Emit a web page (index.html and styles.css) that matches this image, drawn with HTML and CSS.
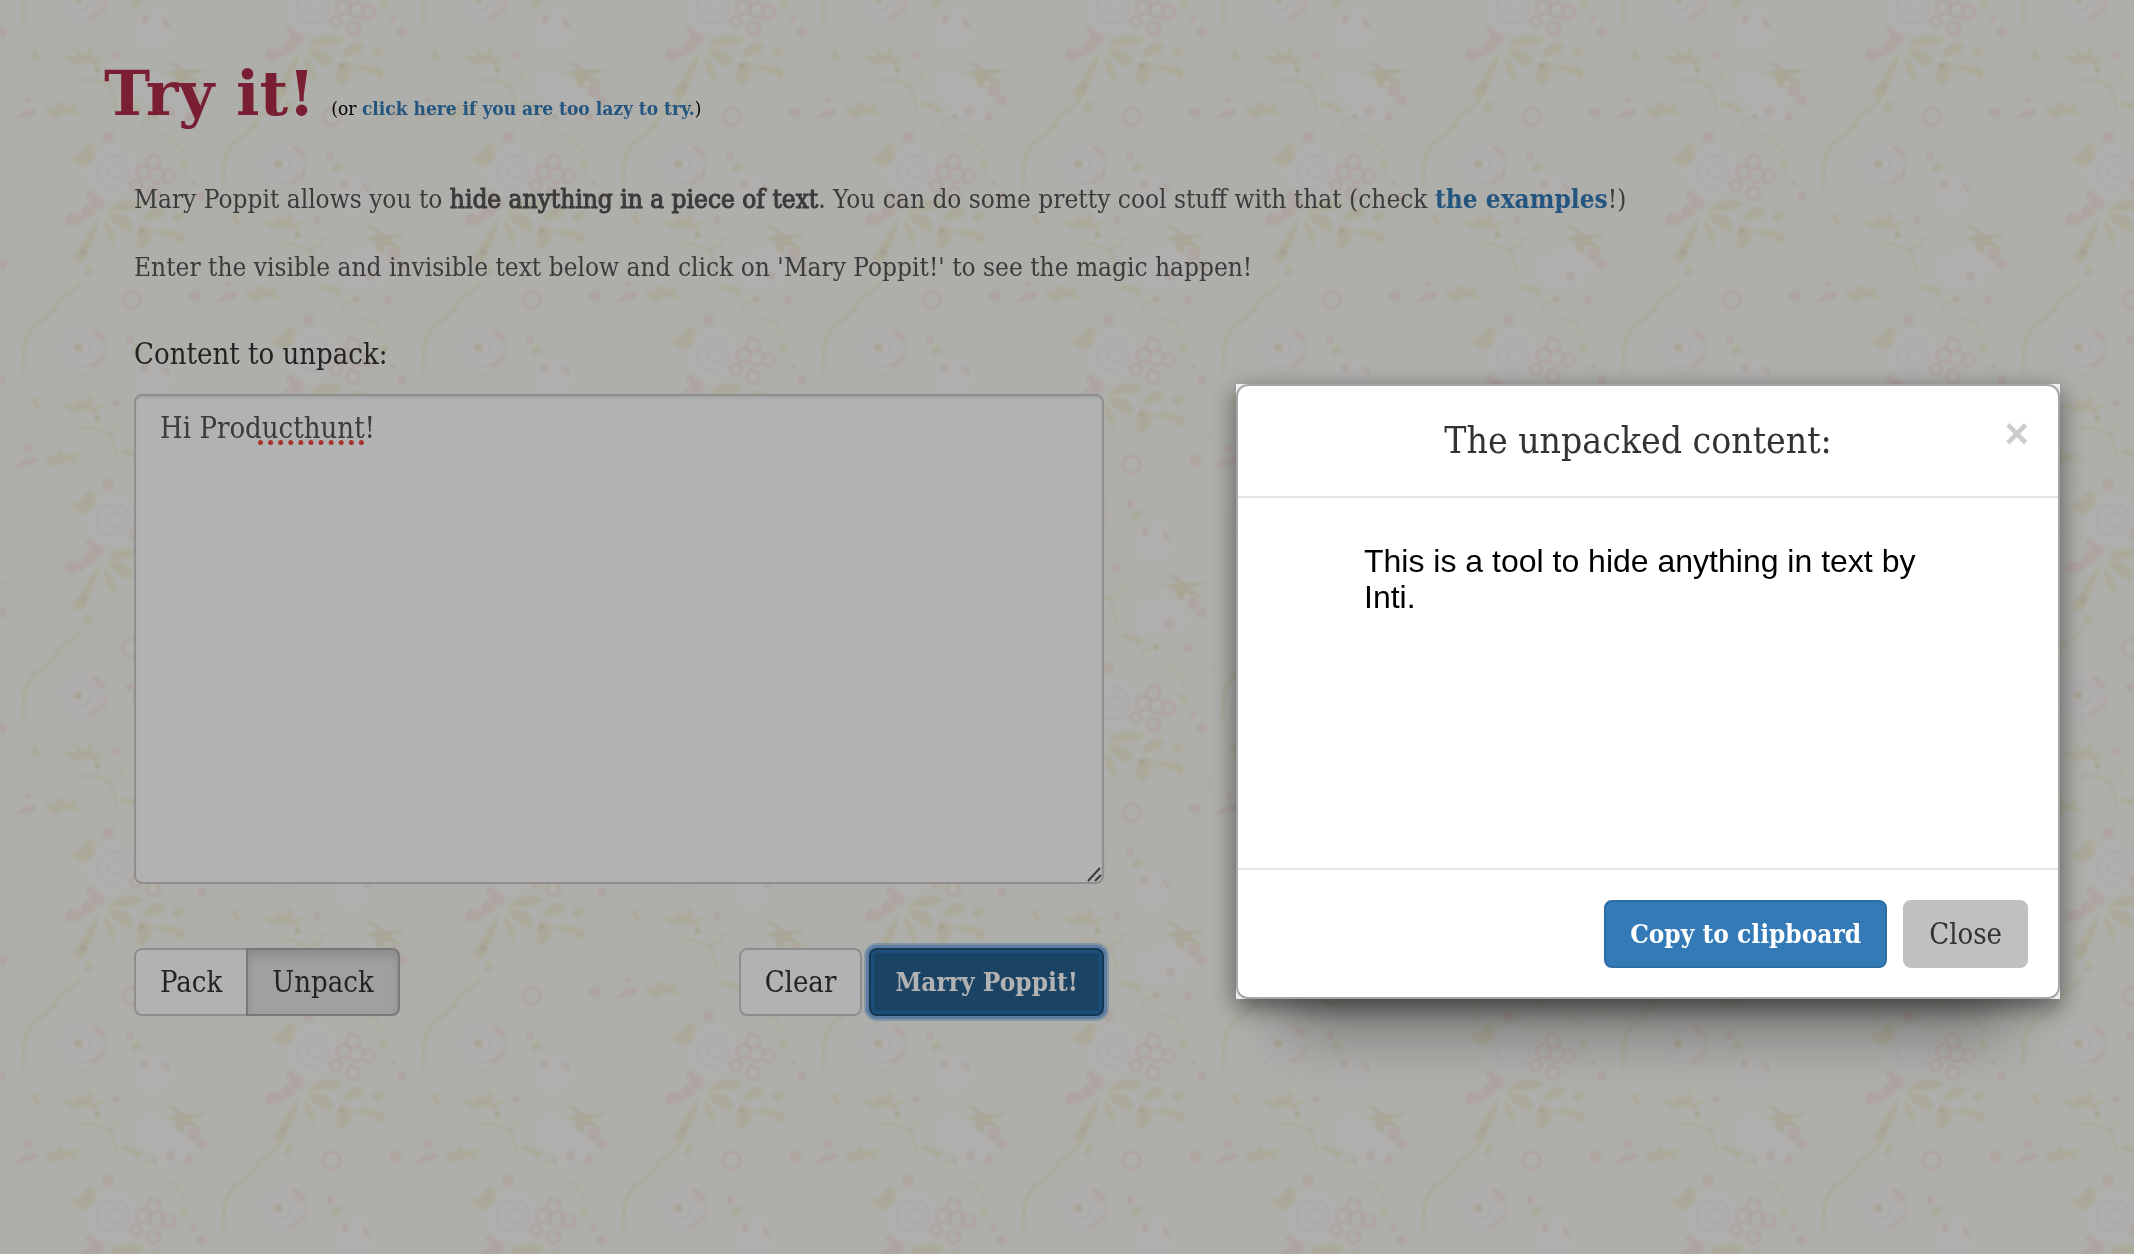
FILE: index.html
```
<!DOCTYPE html>
<html lang="en">
<head>
<meta charset="UTF-8">
<meta name="viewport" content="width=device-width, initial-scale=1.0">

<title>Mary Poppit</title>

<link rel="stylesheet" href="styles.css">
</head>
<body>

<!-- floral wallpaper -->
<svg class="wallpaper" aria-hidden="true">
    <defs>
        <filter id="soft"><feGaussianBlur stdDeviation="1"/></filter>
        <g id="bouquet">
            <g fill="#fdfafa">
                <circle cx="155" cy="455" r="78"/>
                <circle cx="665" cy="435" r="76"/>
                <circle cx="880" cy="520" r="60"/>
                <circle cx="270" cy="200" r="50"/>
                <circle cx="930" cy="740" r="60"/>
            </g>
            <g fill="none" stroke="#f4f0d6" stroke-width="12" stroke-linecap="round">
                <path d="M660 240 Q630 270 600 290 Q570 340 520 370 Q495 400 492 440 L490 500"/>
                <path d="M590 320 L560 335 M500 400 L486 430" stroke-width="8"/>
                <path d="M660 680 Q690 660 740 690 Q770 690 795 650 M740 690 Q770 710 765 765" stroke-width="9"/>
                <path d="M240 320 Q250 295 290 285 M310 345 Q350 350 370 400" stroke-width="9"/>
                <path d="M385 320 Q440 355 500 365 M40 300 L50 380 M690 500 L682 550" stroke-width="3"/>
            </g>
            <g fill="#f3efd0">
                <path d="M28 415 Q50 400 65 395 Q75 365 98 372 Q112 390 105 410 Q85 440 65 440 Q45 425 28 415Z"/>
                <path d="M145 575 Q165 535 200 545 Q230 535 252 550 Q235 575 205 570 Q175 575 145 575Z"/>
                <path d="M245 605 Q260 560 300 560 Q325 570 300 590 Q275 605 245 605Z"/>
                <path d="M140 580 Q190 575 215 605 Q225 630 205 635 Q165 625 140 580Z"/>
                <path d="M238 625 Q255 605 275 630 Q285 660 245 692 Q215 670 238 625Z"/>
                <path d="M285 630 Q330 620 370 645 Q385 660 360 675 Q350 650 285 640Z"/>
                <path d="M120 590 Q90 620 60 680 Q35 700 40 725 Q70 740 80 705 Q110 650 120 590Z"/>
                <path d="M135 600 Q125 640 165 680 Q175 640 135 600Z"/>
                <path d="M340 580 L375 575 L360 605 L335 600Z"/>
                <path d="M605 600 L650 605 L640 575 L670 600 L695 570 L700 610 L735 600 L705 635 L680 620 L640 630Z"/>
                <path d="M510 585 L530 580 L545 620 L520 610Z"/>
                <path d="M185 245 Q220 240 250 270 L235 285 Q215 260 185 260Z"/>
                <path d="M815 440 Q830 420 848 430 Q845 460 815 455Z M360 425 L385 430 L378 458 L360 445Z"/>
                <path d="M1150 265 L1190 260 L1200 240 L1215 260 L1260 250 L1240 270 L1275 290 L1215 280 L1180 300Z"/>
                <path d="M80 735 L100 745 L90 770 L70 765Z M205 365 L220 375 L215 385Z"/>
            </g>
            <path fill="#eee6c6" d="M900 645 Q940 655 955 645 L915 610 Q950 625 975 645 L1040 642 Q1010 655 985 660 L1045 695 Q1000 680 975 675 L970 700 L950 690 L945 665Z"/>
            <g fill="#ecdfc2">
                <circle cx="245" cy="632" r="11"/>
                <circle cx="655" cy="432" r="12"/>
                <circle cx="288" cy="288" r="9"/>
                <circle cx="70" cy="695" r="12"/>
                <circle cx="712" cy="645" r="9"/>
            </g>
            <g fill="none" stroke="#fae0db" stroke-width="9">
                <circle cx="280" cy="425" r="20"/>
                <circle cx="250" cy="455" r="20"/>
                <circle cx="290" cy="465" r="22"/>
                <circle cx="325" cy="470" r="18"/>
                <circle cx="228" cy="497" r="16"/>
                <circle cx="280" cy="520" r="19"/>
                <circle cx="815" cy="290" r="26"/>
                <path d="M740 430 Q735 475 690 490"/>
            </g>
            <g fill="none" stroke="#f9efec" stroke-width="5">
                <circle cx="660" cy="435" r="30"/>
                <circle cx="665" cy="440" r="50"/>
                <circle cx="668" cy="440" r="72"/>
                <circle cx="165" cy="455" r="22"/>
                <circle cx="160" cy="455" r="48"/>
                <circle cx="1030" cy="205" r="22"/>
            </g>
            <g fill="#fae3de">
                <circle cx="110" cy="550" r="22"/>
                <circle cx="85" cy="575" r="20"/>
                <circle cx="35" cy="598" r="20"/>
                <circle cx="60" cy="595" r="14"/>
                <circle cx="90" cy="525" r="12"/>
                <circle cx="425" cy="530" r="14"/>
                <circle cx="400" cy="490" r="9"/>
                <path d="M695 375 Q720 370 740 405 L725 415 Q705 400 695 375Z"/>
                <circle cx="855" cy="490" r="12"/>
                <path d="M905 485 Q930 495 932 520 Q915 520 905 485Z"/>
                <circle cx="1000" cy="705" r="20"/>
                <circle cx="1025" cy="735" r="16"/>
                <circle cx="930" cy="768" r="14"/>
                <path d="M1070 290 Q1095 262 1135 268 Q1130 290 1070 300Z"/>
                <circle cx="1005" cy="278" r="18"/>
                <circle cx="1105" cy="240" r="11"/>
                <circle cx="385" cy="290" r="14"/>
                <circle cx="770" cy="600" r="12"/>
                <circle cx="145" cy="350" r="18"/>
                <circle cx="810" cy="408" r="12"/>
            </g>
        </g>
        <pattern id="flowers" x="60" y="20" width="400" height="348" patternUnits="userSpaceOnUse" viewBox="0 0 1200 1044">
            <use href="#bouquet"/>
            <use href="#bouquet" x="-1200"/>
            <use href="#bouquet" x="1200"/>
            <use href="#bouquet" x="-600" y="550"/>
            <use href="#bouquet" x="600" y="550"/>
            <use href="#bouquet" x="-600" y="-494"/>
            <use href="#bouquet" x="600" y="-494"/>
        </pattern>
    </defs>
    <rect width="100%" height="100%" fill="url(#flowers)" filter="url(#soft)"/>
</svg>

<main class="page">
    <header class="title">
        <h1>Try it!</h1>
        <small>(or <a href="#lazy">click here if you are too lazy to try.</a>)</small>
    </header>

    <div class="content">
        <p>Mary Poppit allows you to <b>hide anything in a piece of text</b>. You can do some pretty cool stuff with that (check <a href="#examples">the examples</a>!)</p>
        <p>Enter the visible and invisible text below and click on 'Mary Poppit!' to see the magic happen!</p>

        <form class="unpack-form">
            <label for="packed">Content to unpack:</label>
            <div class="field">
                <textarea id="packed" name="packed" spellcheck="false">Hi Producthunt!</textarea>
                <span class="misspelled"></span>
                <svg class="grip" viewBox="0 0 16 16" aria-hidden="true"><path d="M2 15 L14 2 M9 15 L15 9"/></svg>
            </div>
            <div class="actions">
                <div class="btn-group">
                    <button class="btn" type="button">Pack</button>
                    <button class="btn active" type="button">Unpack</button>
                </div>
                <div class="btn-row">
                    <button class="btn" type="reset">Clear</button>
                    <button class="btn btn-primary focus" type="button">Marry Poppit!</button>
                </div>
            </div>
        </form>
    </div>
</main>

<div class="backdrop"></div>

<div class="modal" role="dialog" aria-labelledby="modalTitle">
    <div class="modal-content">
        <div class="modal-header">
            <h2 id="modalTitle">The unpacked content:</h2>
            <button class="close" type="button" aria-label="Close">&times;</button>
        </div>
        <div class="modal-body">
            <textarea class="result" aria-labelledby="modalTitle" readonly>This is a tool to hide anything in text by Inti.</textarea>
        </div>
        <div class="modal-footer">
            <button class="btn btn-primary" type="button">Copy to clipboard</button>
            <button class="btn btn-close" type="button">Close</button>
        </div>
    </div>
</div>

</body>
</html>
```
FILE: styles.css
```
* {
    box-sizing: border-box;
}
html {
    height: 100%;
}
body {
    margin: 0;
    min-height: 100%;
    background-color: #f9fbf5;
    font-family: "DejaVu Serif Condensed", "DejaVu Serif", serif;
    font-size: 26px;
    line-height: 36px;
    color: #555;
}
a {
    color: #337ab7;
    font-weight: bold;
    text-decoration: none;
}
b {
    font-weight: 500;
    -webkit-text-stroke: 1px;
}
.wallpaper {
    position: fixed;
    top: 0;
    left: 0;
    z-index: -1;
    width: 100%;
    height: 100%;
    opacity: 0.65;
}
.page {
    padding: 52px 104px;
}
.title {
    display: flex;
    align-items: baseline;
    gap: 16px;
}
.title h1 {
    margin: 0;
    font-family: "DejaVu Serif", serif;
    font-size: 62px;
    line-height: 84px;
    color: #ae2c49;
}
.title small {
    font-size: 19px;
    color: #000;
}
.content {
    padding: 45px 30px 0 30px;
}
.content p {
    margin: 0 0 32px;
}
.unpack-form {
    max-width: 970px;
    padding-top: 19px;
}
.unpack-form label {
    display: block;
    margin-bottom: 22px;
    font-size: 29px;
    color: #333;
}
.field {
    position: relative;
    display: flex;
}
.field textarea {
    flex: 1;
    height: 490px;
    padding: 14px 24px;
    border: 2px solid #ccc;
    border-radius: 8px;
    resize: none;
    background-color: #fff;
    box-shadow: inset 0 2px 2px rgba(0, 0, 0, 0.075);
    font-family: inherit;
    font-size: 29px;
    line-height: 36px;
    color: #555;
}
.misspelled {
    position: absolute;
    top: 46px;
    left: 124px;
    width: 106px;
    border-bottom: 5px dotted #f0483c;
}
.grip {
    position: absolute;
    right: 2px;
    bottom: 2px;
    width: 16px;
    height: 16px;
    fill: none;
    stroke: #555;
    stroke-width: 2;
    pointer-events: none;
}
.actions {
    display: flex;
    justify-content: space-between;
    margin-top: 64px;
}
.btn-group {
    display: flex;
}
.btn-group .btn:first-child {
    border-right: none;
    border-radius: 8px 0 0 8px;
}
.btn-group .btn:last-child {
    border-radius: 0 8px 8px 0;
}
.btn-row {
    display: flex;
    gap: 7px;
}
.btn {
    height: 68px;
    padding: 0 24px;
    border: 2px solid #ccc;
    border-radius: 8px;
    background-color: #fff;
    font-family: inherit;
    font-size: 29px;
    line-height: 36px;
    color: #333;
    cursor: pointer;
}
.btn.active {
    border-color: #adadad;
    background-color: #e6e6e6;
    box-shadow: inset 0 6px 10px rgba(0, 0, 0, 0.125);
}
.btn-primary {
    border-color: #2e6da4;
    background-color: #337ab7;
    font-size: 26px;
    font-weight: bold;
    color: #fff;
}
.btn-primary.focus {
    border-color: #204d74;
    background-color: #286090;
    box-shadow: inset 0 0 0 3px #2a72b4, 0 0 0 3px #82b4e8, 0 0 0 5px rgba(130, 180, 232, 0.5);
}
.backdrop {
    position: fixed;
    inset: 0;
    background-color: rgba(0, 0, 0, 0.3);
}
.modal {
    position: fixed;
    top: 384px;
    right: 74px;
    width: 90%;
    max-width: 824px;
    background-color: #eee;
    box-shadow: 0 8px 24px rgba(0, 0, 0, 0.5), 0 80px 60px -50px rgba(0, 0, 0, 0.35);
}
.modal-content {
    border: 2px solid rgba(0, 0, 0, 0.3);
    border-radius: 12px;
    background-color: #fff;
    background-clip: padding-box;
}
.modal-header {
    position: relative;
    padding: 34px 30px;
    border-bottom: 2px solid #e5e5e5;
    text-align: center;
}
.modal-header h2 {
    margin: 0;
    padding-right: 20px;
    font-size: 37px;
    font-weight: normal;
    line-height: 42px;
    color: #333;
}
.close {
    position: absolute;
    top: 27px;
    right: 29px;
    padding: 0;
    border: none;
    background: none;
    font-family: "Liberation Sans", sans-serif;
    font-size: 42px;
    font-weight: bold;
    line-height: 42px;
    color: #ccc;
    cursor: pointer;
}
.modal-body {
    padding: 45px 100px 29px 126px;
}
.result {
    display: block;
    width: 100%;
    height: 296px;
    padding: 0;
    border: none;
    resize: none;
    background: none;
    font-family: "Liberation Sans", Arial, sans-serif;
    font-size: 32px;
    line-height: 36px;
    color: #000;
}
.modal-footer {
    display: flex;
    justify-content: flex-end;
    gap: 16px;
    padding: 30px 30px 29px;
    border-top: 2px solid #e5e5e5;
}
.btn-close {
    border-color: #c0c0c0;
    background-color: #c0c0c0;
}
```
